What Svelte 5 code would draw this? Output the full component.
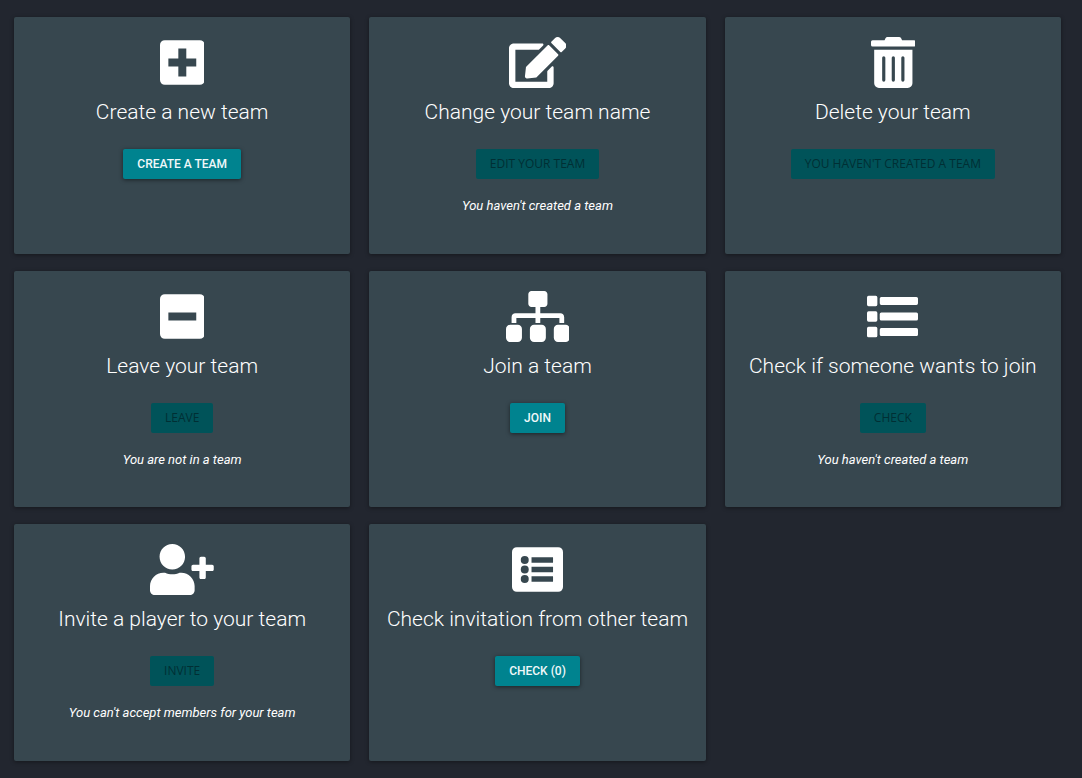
<script>
  const cards = [
    { icon: 'plus', title: 'Create a new team', action: 'Create a team' },
    { icon: 'edit', title: 'Change your team name', action: 'Edit your team', disabled: true, note: "You haven't created a team" },
    { icon: 'trash', title: 'Delete your team', action: "You haven't created a team", disabled: true },
    { icon: 'minus', title: 'Leave your team', action: 'Leave', disabled: true, note: 'You are not in a team' },
    { icon: 'sitemap', title: 'Join a team', action: 'Join' },
    { icon: 'list', title: 'Check if someone wants to join', action: 'Check', disabled: true, note: "You haven't created a team" },
    { icon: 'invite', title: 'Invite a player to your team', action: 'Invite', disabled: true, note: "You can't accept members for your team" },
    { icon: 'listbox', title: 'Check invitation from other team', action: 'Check (0)' },
  ];

  // Each glyph is drawn on a 512-unit-high canvas; w is the canvas width.
  const icons = {
    plus: { w: 448, d: 'M48 32h352a48 48 0 0 1 48 48v352a48 48 0 0 1-48 48H48a48 48 0 0 1-48-48V80a48 48 0 0 1 48-48zM184 116v100H84v80h100v100h80V296h100v-80H264V116z' },
    minus: { w: 448, d: 'M48 32h352a48 48 0 0 1 48 48v352a48 48 0 0 1-48 48H48a48 48 0 0 1-48-48V80a48 48 0 0 1 48-48zM84 216v80h280v-80z' },
    edit: { w: 576, d: 'M402.600 83.200l90.200 90.200c3.800 3.800 3.800 10 0 13.800L274.400 405.600l-92.800 10.300c-12.400 1.400-22.900-9.100-21.500-21.500l10.300-92.800L388.800 83.200c3.800-3.800 10-3.800 13.800 0zm162-22.900l-48.800-48.800c-15.200-15.200-39.900-15.200-55.200 0l-35.400 35.400c-3.800 3.800-3.800 10 0 13.800l90.200 90.200c3.800 3.800 10 3.800 13.800 0l35.400-35.400c15.200-15.300 15.200-40 0-55.200zM384 346.200V448H64V128h229.800c3.200 0 6.200-1.300 8.500-3.500l40-40c7.600-7.600 2.200-20.500-8.500-20.500H48C21.500 64 0 85.500 0 112v352c0 26.500 21.500 48 48 48h352c26.500 0 48-21.500 48-48V306.200c0-10.700-12.900-16-20.500-8.500l-40 40c-2.200 2.300-3.500 5.300-3.500 8.500z' },
    trash: { w: 448, d: 'M32 464a48 48 0 0 0 48 48h288a48 48 0 0 0 48-48V128H32zm272-256a16 16 0 0 1 32 0v224a16 16 0 0 1-32 0zm-96 0a16 16 0 0 1 32 0v224a16 16 0 0 1-32 0zm-96 0a16 16 0 0 1 32 0v224a16 16 0 0 1-32 0zM432 32H312l-9.400-18.700A24 24 0 0 0 281.100 0H166.800a23.700 23.700 0 0 0-21.400 13.300L136 32H16A16 16 0 0 0 0 48v32a16 16 0 0 0 16 16h416a16 16 0 0 0 16-16V48a16 16 0 0 0-16-16z' },
    sitemap: { w: 640, d: 'M118 340H42a42 42 0 0 0-42 42v88a42 42 0 0 0 42 42h76a42 42 0 0 0 42-42v-88a42 42 0 0 0-42-42zM104 272h192v48h48v-48h192v48h48v-57.600c0-21.200-17.200-38.400-38.400-38.400H344v-64h40c17.700 0 32-14.300 32-32V32c0-17.700-14.300-32-32-32H256c-17.700 0-32 14.300-32 32v96c0 17.700 14.300 32 32 32h40v64H94.400C73.200 224 56 241.200 56 262.400V320h48zM358 340h-76a42 42 0 0 0-42 42v88a42 42 0 0 0 42 42h76a42 42 0 0 0 42-42v-88a42 42 0 0 0-42-42zM598 340h-76a42 42 0 0 0-42 42v88a42 42 0 0 0 42 42h76a42 42 0 0 0 42-42v-88a42 42 0 0 0-42-42z' },
    list: { w: 512, d: 'M16 48h72a16 16 0 0 1 16 16v72a16 16 0 0 1-16 16H16a16 16 0 0 1-16-16V64a16 16 0 0 1 16-16zM16 204h72a16 16 0 0 1 16 16v72a16 16 0 0 1-16 16H16a16 16 0 0 1-16-16v-72a16 16 0 0 1 16-16zM16 360h72a16 16 0 0 1 16 16v72a16 16 0 0 1-16 16H16a16 16 0 0 1-16-16v-72a16 16 0 0 1 16-16zM144 60h352a16 16 0 0 1 16 16v48a16 16 0 0 1-16 16H144a16 16 0 0 1-16-16V76a16 16 0 0 1 16-16zM144 216h352a16 16 0 0 1 16 16v48a16 16 0 0 1-16 16H144a16 16 0 0 1-16-16v-48a16 16 0 0 1 16-16zM144 372h352a16 16 0 0 1 16 16v48a16 16 0 0 1-16 16H144a16 16 0 0 1-16-16v-48a16 16 0 0 1 16-16z' },
    invite: { w: 640, d: 'M624 208h-64v-64c0-8.800-7.200-16-16-16h-32c-8.800 0-16 7.200-16 16v64h-64c-8.800 0-16 7.200-16 16v32c0 8.800 7.200 16 16 16h64v64c0 8.800 7.200 16 16 16h32c8.800 0 16-7.200 16-16v-64h64c8.800 0 16-7.200 16-16v-32c0-8.800-7.200-16-16-16zm-400 48c70.700 0 128-57.300 128-128S294.700 0 224 0 96 57.300 96 128s57.300 128 128 128zm89.600 32h-16.700c-22.200 10.200-46.900 16-72.900 16s-50.600-5.800-72.900-16h-16.700C60.200 288 0 348.200 0 422.400V464c0 26.500 21.500 48 48 48h352c26.500 0 48-21.500 48-48v-41.600c0-74.200-60.200-134.400-134.400-134.400z' },
    listbox: { w: 512, d: 'M48 32h416a48 48 0 0 1 48 48v352a48 48 0 0 1-48 48H48a48 48 0 0 1-48-48V80a48 48 0 0 1 48-48zM128 120a40 40 0 1 0 0 80a40 40 0 1 0 0-80zM128 216a40 40 0 1 0 0 80a40 40 0 1 0 0-80zM128 312a40 40 0 1 0 0 80a40 40 0 1 0 0-80zM196 132v56h216v-56zM196 228v56h216v-56zM196 324v56h216v-56z' },
  };
</script>

<main class="grid">
  {#each cards as card}
    <section class="card">
      <svg class="icon" viewBox="0 0 {icons[card.icon].w} 512" aria-hidden="true">
        <path d={icons[card.icon].d} fill-rule="evenodd" />
      </svg>
      <h2>{card.title}</h2>
      <button type="button" disabled={card.disabled}>{card.action}</button>
      {#if card.note}
        <p>{card.note}</p>
      {/if}
    </section>
  {/each}
</main>

<style>
  :global(body) {
    margin: 0;
    background: #22262f;
  }

  .grid {
    box-sizing: border-box;
    min-height: 100vh;
    padding: 17px 21px 17px 14px;
    display: grid;
    grid-template-columns: repeat(3, minmax(0, 1fr));
    grid-template-rows: repeat(3, 1fr);
    gap: 17px 19px;
    font-family: Roboto, "Liberation Sans", sans-serif;
    color: #fff;
  }

  .card {
    display: flex;
    flex-direction: column;
    align-items: center;
    padding: 20px 10px;
    border-radius: 2px;
    background: #37474f;
    box-shadow: 0 1px 4px rgba(0, 0, 0, 0.4);
    text-align: center;
  }

  .icon {
    height: 51px;
    fill: #fff;
  }

  h2 {
    margin: 10px 0 23px;
    font-size: 21px;
    line-height: 28px;
    font-weight: 300;
  }

  button {
    height: 30px;
    padding: 0 14px;
    border: 0;
    border-radius: 2px;
    background: #00838f;
    box-shadow: 0 1px 4px rgba(0, 0, 0, 0.5);
    color: #f0f8f9;
    font-family: inherit;
    font-size: 12px;
    line-height: 30px;
    font-weight: 500;
    text-transform: uppercase;
  }

  button:disabled {
    background: #005359;
    box-shadow: none;
    color: #002f34;
    font-family: "Open Sans", "Noto Sans", sans-serif;
    font-weight: 400;
  }

  p {
    margin: 17px 0 0;
    font-size: 13px;
    line-height: 20px;
    font-style: italic;
  }
</style>
